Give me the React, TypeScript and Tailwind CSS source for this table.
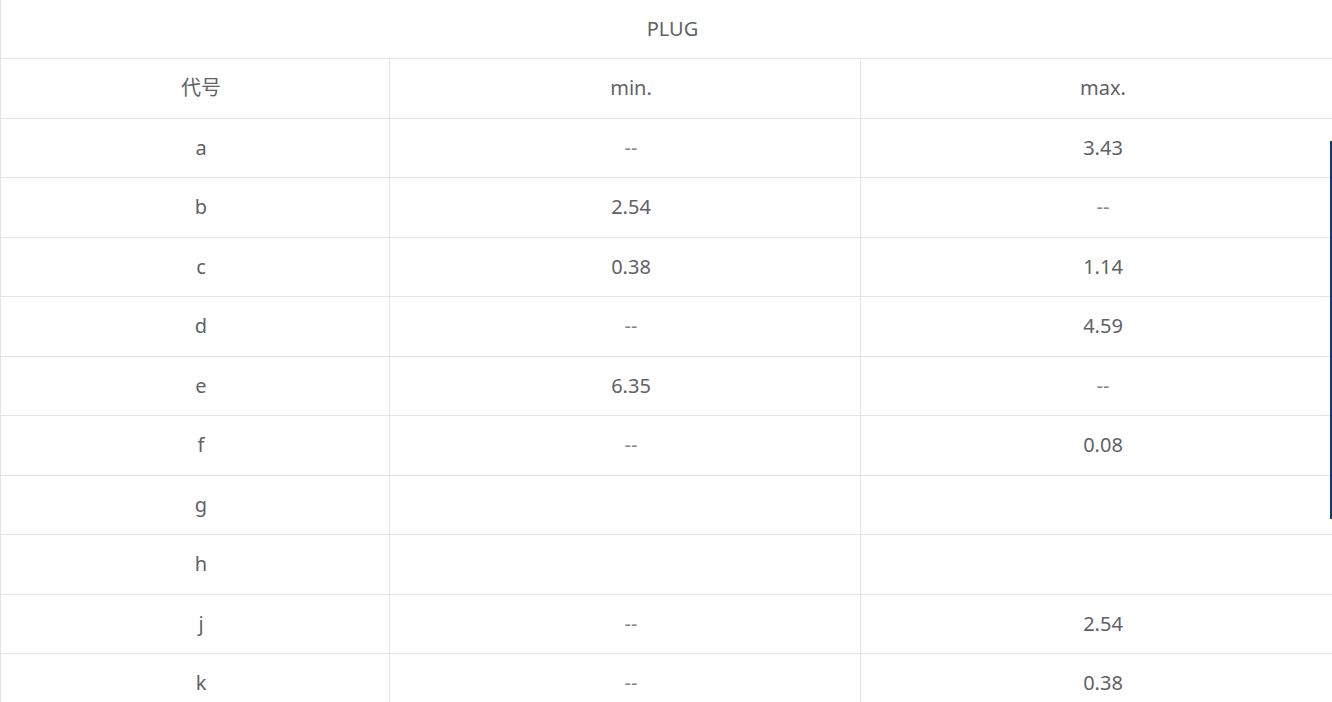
import React from "react";

const rows: [string, string, string][] = [
  ["a", "--", "3.43"],
  ["b", "2.54", "--"],
  ["c", "0.38", "1.14"],
  ["d", "--", "4.59"],
  ["e", "6.35", "--"],
  ["f", "--", "0.08"],
  ["g", "", ""],
  ["h", "", ""],
  ["j", "--", "2.54"],
  ["k", "--", "0.38"],
];

export default function App() {
  return (
    <div
      className="relative w-[1332px] h-[702px] overflow-hidden bg-white text-[#606266] text-[20px]"
      style={{ fontFamily: '"Noto Sans", "Noto Sans CJK SC", sans-serif' }}
    >
      <div className="w-[1332px] border-l border-[#e4e4e4]">
        <div className="h-[59px] border-b border-[#e4e4e4] flex items-center justify-center pl-[12px]">
          PLUG
        </div>
        <div className="grid grid-cols-[389px_471px_472px]">
          {[["代号", "min.", "max."], ...rows].map((r, i) => (
            <React.Fragment key={i}>
              {r.map((c, j) => (
                <div
                  key={j}
                  className={`h-[59.5px] border-b border-[#e4e4e4] flex items-center justify-center pl-[12px] ${
                    j < 2 ? "border-r" : ""
                  } ${c === "--" ? "text-[#888]" : ""}`}
                >
                  {c}
                </div>
              ))}
            </React.Fragment>
          ))}
        </div>
      </div>
      <div className="absolute left-[1330px] top-[141px] w-[2px] h-[378px] bg-[#0b3a7e]" />
    </div>
  );
}
